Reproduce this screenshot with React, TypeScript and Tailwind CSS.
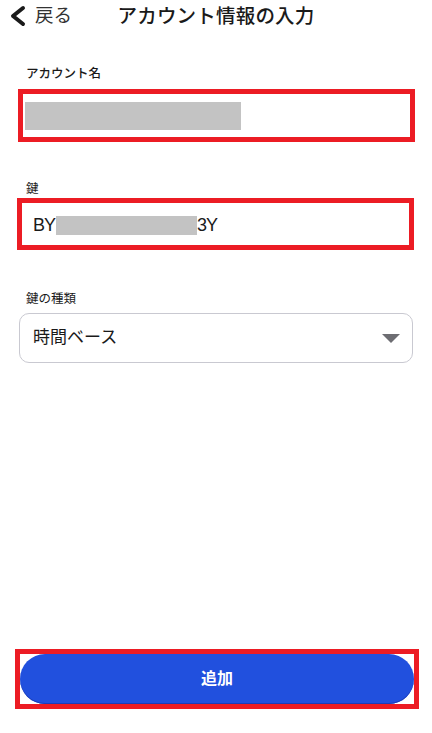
export default function App() {
  return (
    <div
      className="flex h-[733px] w-full flex-col bg-white text-[#1a1a1a]"
      style={{ fontFamily: '"Liberation Sans", "Noto Sans CJK JP", sans-serif' }}
    >
      {/* Header */}
      <header className="grid h-[32px] grid-cols-[1fr_auto_1fr] items-center">
        <div className="flex items-center pl-[8px]">
          <svg width="18" height="22" viewBox="0 0 18 22" className="shrink-0">
            <path d="M15 3 L5 11 L15 19" fill="none" stroke="#1a1a1a" strokeWidth="4" strokeLinecap="round" strokeLinejoin="round" />
          </svg>
          <span className="ml-[9px] text-[18.5px] leading-[22px] text-[#333]">戻る</span>
        </div>
        <h1 className="text-[19.5px] font-medium leading-[26px] tracking-[0.2px]">アカウント情報の入力</h1>
        <div />
      </header>

      <main className="flex flex-1 flex-col">
        {/* アカウント名 */}
        <label className="mt-[34px] pl-[26px] text-[12.5px] font-medium leading-[16px]">アカウント名</label>
        <div className="ml-[18px] mt-[7px] h-[53px] w-[397px] border-[5px] border-[#ec1c24] bg-white px-[2px] pt-[8px]">
          <div className="h-[28px] w-[216px] bg-[#c3c3c3]" />
        </div>

        {/* 鍵 */}
        <label className="mt-[39px] pl-[26px] text-[12.5px] leading-[16px]">鍵</label>
        <div className="ml-[17px] mt-[1px] flex h-[52px] w-[397px] items-center border-[5px] border-[#ec1c24] bg-white pl-[11px] pt-[2px]">
          <span className="text-[18px] leading-[24px] tracking-[-1px]">BY</span>
          <span className="ml-[1px] h-[19px] w-[141px] bg-[#c3c3c3]" />
          <span className="text-[18px] leading-[24px] tracking-[-1px]">3Y</span>
        </div>

        {/* 鍵の種類 */}
        <label className="mt-[41px] pl-[26px] text-[12.5px] leading-[16px]">鍵の種類</label>
        <div className="ml-[19px] mt-[6px] flex h-[50px] w-[394px] items-center justify-between rounded-[10px] border border-[#c9c9d1] pl-[13px] pr-[12px]">
          <span className="text-[17px] leading-[26px]">時間ベース</span>
          <svg width="18" height="9" viewBox="0 0 18 9">
            <path d="M0 0 H18 L9 9 Z" fill="#6d6d72" />
          </svg>
        </div>

        {/* 追加 */}
        <div className="mb-[24px] ml-[15px] mt-auto w-[404px] border-[5px] border-[#ec1c24] bg-white">
          <button className="flex h-[50px] w-full items-center justify-center rounded-full bg-[#2150de] text-[16px] font-bold text-white shadow-[inset_0_-1px_0_#1a3cb8]">
            追加
          </button>
        </div>
      </main>
    </div>
  );
}
